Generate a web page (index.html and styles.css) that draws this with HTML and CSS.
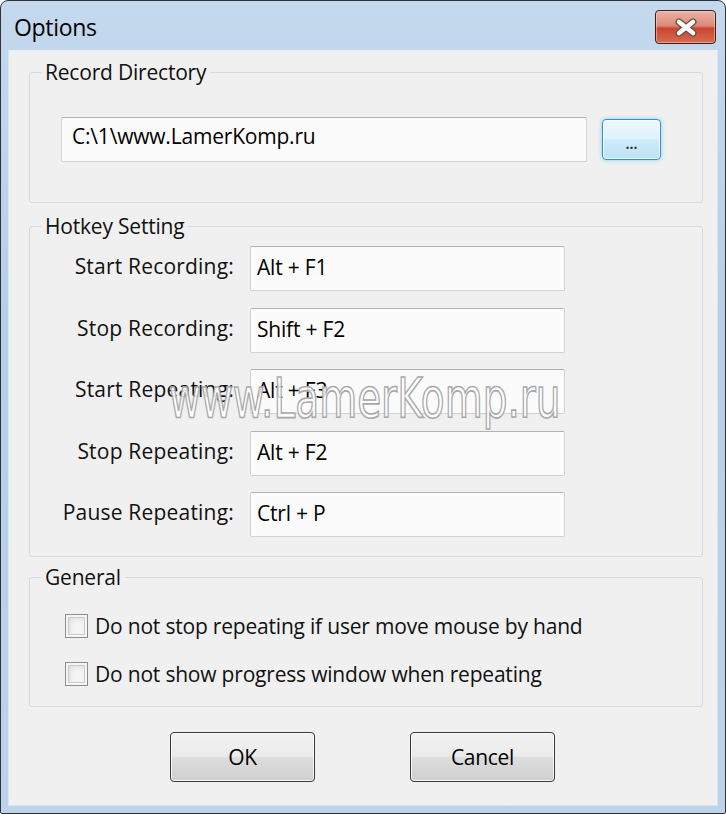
FILE: index.html
```html
<!DOCTYPE html>
<html lang="en">
<head>
    <meta charset="UTF-8">
    <title>Options</title>
    <link rel="stylesheet" href="styles.css">
</head>
<body>
    <div class="window">
        <div class="titlebar">
            <div class="title">Options</div>
            <button class="close-btn">
                <svg width="24" height="19" viewBox="0 0 24 19">
                    <path d="M5 4 L19 15 M19 4 L5 15" stroke="#6b4a44" stroke-width="7" stroke-linecap="round" fill="none"/>
                    <path d="M5 4 L19 15 M19 4 L5 15" stroke="#ffffff" stroke-width="4.5" stroke-linecap="round" fill="none"/>
                </svg>
            </button>
        </div>

        <div class="client">
            <fieldset class="group group-dir">
                <legend>Record Directory</legend>
                <div class="dir-row">
                    <div class="field dir-field">C:\1\www.LamerKomp.ru</div>
                    <button class="browse-btn">...</button>
                </div>
            </fieldset>

            <fieldset class="group group-hotkey">
                <legend>Hotkey Setting</legend>
                <div class="hotkey-grid">
                    <label class="hk-label">Start Recording:</label>
                    <div class="field hk-field">Alt + F1</div>
                    <label class="hk-label">Stop Recording:</label>
                    <div class="field hk-field">Shift + F2</div>
                    <label class="hk-label">Start Repeating:</label>
                    <div class="field hk-field">Alt + F3</div>
                    <label class="hk-label">Stop Repeating:</label>
                    <div class="field hk-field">Alt + F2</div>
                    <label class="hk-label">Pause Repeating:</label>
                    <div class="field hk-field">Ctrl + P</div>
                </div>
            </fieldset>

            <fieldset class="group group-general">
                <legend>General</legend>
                <div class="check-list">
                    <label class="check-row"><span class="checkbox"></span>Do not stop repeating if user move mouse by hand</label>
                    <label class="check-row"><span class="checkbox"></span>Do not show progress window when repeating</label>
                </div>
            </fieldset>

            <div class="dialog-buttons">
                <button class="push-btn">OK</button>
                <button class="push-btn">Cancel</button>
            </div>
        </div>

        <div class="watermark">www.LamerKomp.ru</div>
    </div>
</body>
</html>
```

FILE: styles.css
```css
* {
    margin: 0;
    padding: 0;
    box-sizing: border-box;
}

body {
    background: #ffffff;
    font-family: 'Open Sans', 'Noto Sans', sans-serif;
    color: #111;
}

.window {
    width: 726px;
    height: 814px;
    border: 1px solid #2e3236;
    border-radius: 8px 8px 2px 2px;
    background: linear-gradient(180deg, #c4d9ee 0%, #b6cee7 40%, #bcd3ea 100%);
    display: flex;
    flex-direction: column;
    position: relative;
    overflow: hidden;
}

.titlebar {
    height: 49px;
    display: flex;
    justify-content: space-between;
    align-items: flex-start;
    padding: 9px 9px 0 13px;
}

.title {
    font-size: 23px;
    line-height: 34px;
    letter-spacing: -0.3px;
    color: #000;
}

.close-btn {
    width: 61px;
    height: 34px;
    border: 1px solid #3d1e18;
    border-radius: 4px;
    background: linear-gradient(180deg, #eab2a5 0%, #dc8a78 46%, #c9472e 54%, #d86a50 100%);
    box-shadow: inset 0 0 0 1px rgba(255, 220, 210, 0.5);
    display: flex;
    align-items: center;
    justify-content: center;
}

.client {
    flex: 1;
    margin: 0 7px 7px;
    background: #f0f0f0;
    border: 1px solid #d8e6f2;
    border-top: none;
    padding: 0 14px 0 20px;
    font-size: 21px;
    letter-spacing: -0.2px;
}

.group {
    border: 1px solid #d3dbe2;
    border-radius: 3px;
    padding: 0;
    min-width: 0;
}

.group legend {
    margin-left: 11px;
    padding: 0 4px;
    font-size: 21px;
    line-height: 24px;
    color: #111;
}

.group-dir {
    margin-top: 10px;
    padding: 33px 0 40px 0;
}

.group-hotkey {
    margin-top: 11px;
    padding: 8px 0 19px 0;
}

.group-general {
    margin-top: 8px;
    padding: 23px 0 18px 0;
}

.field {
    background: #fbfbfb;
    border: 1px solid #cfd2d6;
    border-top-color: #aeb1b6;
    border-radius: 2px;
    color: #000;
}

.dir-row {
    display: flex;
    align-items: center;
    gap: 15px;
    margin-left: 31px;
}

.dir-field {
    width: 526px;
    height: 45px;
    padding: 3px 10px 0;
    line-height: 30px;
}

.browse-btn {
    width: 59px;
    height: 41px;
    border: 1px solid #3c8fc0;
    border-radius: 4px;
    background: linear-gradient(180deg, #eef8fd 0%, #dff2fc 48%, #cdebfb 52%, #bde3f6 100%);
    box-shadow: 0 0 4px rgba(80, 200, 240, 0.7), inset 0 0 0 1px rgba(255, 255, 255, 0.7);
    font-family: 'Open Sans', sans-serif;
    font-size: 14px;
    font-weight: 700;
    color: #333;
    padding-top: 8px;
}

.hotkey-grid {
    display: grid;
    grid-template-columns: 204px 315px;
    grid-auto-rows: 45px;
    column-gap: 16px;
    row-gap: 16.5px;
}

.hk-label {
    text-align: right;
    line-height: 40px;
    letter-spacing: 0.2px;
    color: #111;
}

.hk-field {
    padding: 2px 6px 0;
    line-height: 36px;
}

.check-list {
    display: flex;
    flex-direction: column;
    gap: 20px;
    margin-left: 35px;
}

.check-row {
    height: 28px;
    display: flex;
    align-items: center;
    gap: 7px;
    color: #111;
}

.checkbox {
    width: 23px;
    height: 24px;
    border: 1px solid #8a8c8e;
    background: #f4f4f4;
    box-shadow: inset 0 0 0 2px #f6f6f6, inset 0 0 0 3px #c9cbcd, inset 2px 2px 6px #c8c8c8;
    flex-shrink: 0;
}

.dialog-buttons {
    display: flex;
    gap: 95px;
    margin-top: 25px;
    padding-left: 141px;
}

.push-btn {
    width: 145px;
    height: 50px;
    border: 1px solid #3a3a3a;
    border-radius: 4px;
    background: linear-gradient(180deg, #f2f2f2 0%, #ebebeb 48%, #dddddd 52%, #cfcfcf 100%);
    box-shadow: inset 0 0 0 1px rgba(255, 255, 255, 0.8);
    font-family: 'Open Sans', sans-serif;
    font-size: 21px;
    letter-spacing: -0.3px;
    color: #000;
}

.watermark {
    position: absolute;
    left: 168px;
    top: 377px;
    font-family: 'DejaVu Sans', sans-serif;
    font-size: 39px;
    line-height: 30px;
    color: rgba(255, 255, 255, 0.85);
    -webkit-text-stroke: 1.2px #a9a9a9;
    transform: scaleY(1.4);
    transform-origin: 0 0;
    pointer-events: none;
    white-space: nowrap;
}
```
